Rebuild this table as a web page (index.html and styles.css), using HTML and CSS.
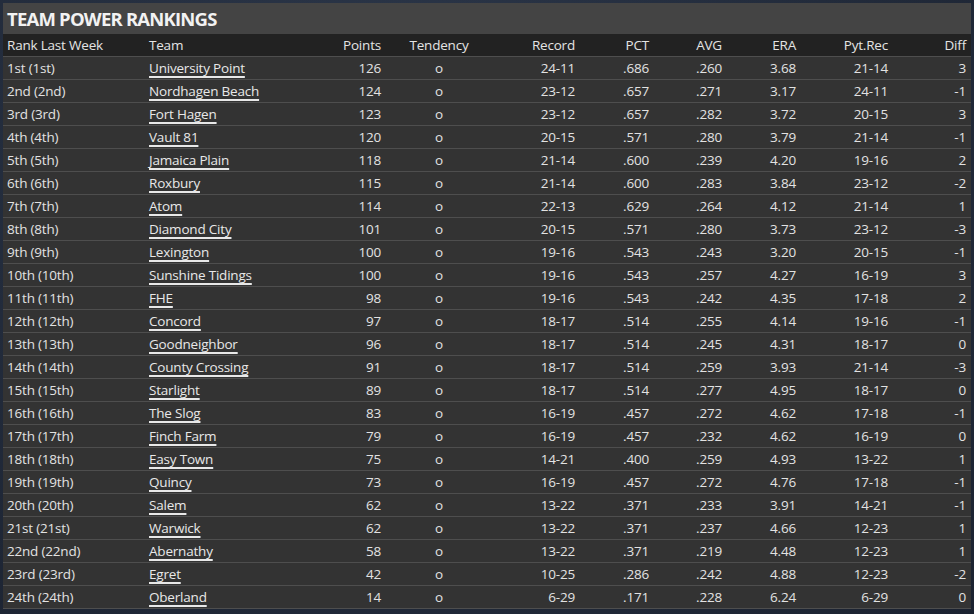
FILE: index.html
```html
<!DOCTYPE html>
<html>
<head>
<meta charset="utf-8">
<link rel="stylesheet" href="styles.css">
</head>
<body>
<div class="panel">
  <div class="title">TEAM POWER RANKINGS</div>
  <table class="rank">
    <colgroup>
      <col class="c-rank"><col class="c-team"><col class="c-pts"><col class="c-tend"><col class="c-rec"><col class="c-pct"><col class="c-avg"><col class="c-era"><col class="c-pyt"><col class="c-diff">
    </colgroup>
    <thead>
      <tr><th class="l">Rank Last Week</th><th class="l">Team</th><th>Points</th><th class="c">Tendency</th><th>Record</th><th>PCT</th><th>AVG</th><th>ERA</th><th>Pyt.Rec</th><th>Diff</th></tr>
    </thead>
    <tbody>
      <tr><td class="l">1st (1st)</td><td class="l"><a>University Point</a></td><td>126</td><td class="c">o</td><td>24-11</td><td>.686</td><td>.260</td><td>3.68</td><td>21-14</td><td>3</td></tr>
      <tr><td class="l">2nd (2nd)</td><td class="l"><a>Nordhagen Beach</a></td><td>124</td><td class="c">o</td><td>23-12</td><td>.657</td><td>.271</td><td>3.17</td><td>24-11</td><td>-1</td></tr>
      <tr><td class="l">3rd (3rd)</td><td class="l"><a>Fort Hagen</a></td><td>123</td><td class="c">o</td><td>23-12</td><td>.657</td><td>.282</td><td>3.72</td><td>20-15</td><td>3</td></tr>
      <tr><td class="l">4th (4th)</td><td class="l"><a>Vault 81</a></td><td>120</td><td class="c">o</td><td>20-15</td><td>.571</td><td>.280</td><td>3.79</td><td>21-14</td><td>-1</td></tr>
      <tr><td class="l">5th (5th)</td><td class="l"><a>Jamaica Plain</a></td><td>118</td><td class="c">o</td><td>21-14</td><td>.600</td><td>.239</td><td>4.20</td><td>19-16</td><td>2</td></tr>
      <tr><td class="l">6th (6th)</td><td class="l"><a>Roxbury</a></td><td>115</td><td class="c">o</td><td>21-14</td><td>.600</td><td>.283</td><td>3.84</td><td>23-12</td><td>-2</td></tr>
      <tr><td class="l">7th (7th)</td><td class="l"><a>Atom</a></td><td>114</td><td class="c">o</td><td>22-13</td><td>.629</td><td>.264</td><td>4.12</td><td>21-14</td><td>1</td></tr>
      <tr><td class="l">8th (8th)</td><td class="l"><a>Diamond City</a></td><td>101</td><td class="c">o</td><td>20-15</td><td>.571</td><td>.280</td><td>3.73</td><td>23-12</td><td>-3</td></tr>
      <tr><td class="l">9th (9th)</td><td class="l"><a>Lexington</a></td><td>100</td><td class="c">o</td><td>19-16</td><td>.543</td><td>.243</td><td>3.20</td><td>20-15</td><td>-1</td></tr>
      <tr><td class="l">10th (10th)</td><td class="l"><a>Sunshine Tidings</a></td><td>100</td><td class="c">o</td><td>19-16</td><td>.543</td><td>.257</td><td>4.27</td><td>16-19</td><td>3</td></tr>
      <tr><td class="l">11th (11th)</td><td class="l"><a>FHE</a></td><td>98</td><td class="c">o</td><td>19-16</td><td>.543</td><td>.242</td><td>4.35</td><td>17-18</td><td>2</td></tr>
      <tr><td class="l">12th (12th)</td><td class="l"><a>Concord</a></td><td>97</td><td class="c">o</td><td>18-17</td><td>.514</td><td>.255</td><td>4.14</td><td>19-16</td><td>-1</td></tr>
      <tr><td class="l">13th (13th)</td><td class="l"><a>Goodneighbor</a></td><td>96</td><td class="c">o</td><td>18-17</td><td>.514</td><td>.245</td><td>4.31</td><td>18-17</td><td>0</td></tr>
      <tr><td class="l">14th (14th)</td><td class="l"><a>County Crossing</a></td><td>91</td><td class="c">o</td><td>18-17</td><td>.514</td><td>.259</td><td>3.93</td><td>21-14</td><td>-3</td></tr>
      <tr><td class="l">15th (15th)</td><td class="l"><a>Starlight</a></td><td>89</td><td class="c">o</td><td>18-17</td><td>.514</td><td>.277</td><td>4.95</td><td>18-17</td><td>0</td></tr>
      <tr><td class="l">16th (16th)</td><td class="l"><a>The Slog</a></td><td>83</td><td class="c">o</td><td>16-19</td><td>.457</td><td>.272</td><td>4.62</td><td>17-18</td><td>-1</td></tr>
      <tr><td class="l">17th (17th)</td><td class="l"><a>Finch Farm</a></td><td>79</td><td class="c">o</td><td>16-19</td><td>.457</td><td>.232</td><td>4.62</td><td>16-19</td><td>0</td></tr>
      <tr><td class="l">18th (18th)</td><td class="l"><a>Easy Town</a></td><td>75</td><td class="c">o</td><td>14-21</td><td>.400</td><td>.259</td><td>4.93</td><td>13-22</td><td>1</td></tr>
      <tr><td class="l">19th (19th)</td><td class="l"><a>Quincy</a></td><td>73</td><td class="c">o</td><td>16-19</td><td>.457</td><td>.272</td><td>4.76</td><td>17-18</td><td>-1</td></tr>
      <tr><td class="l">20th (20th)</td><td class="l"><a>Salem</a></td><td>62</td><td class="c">o</td><td>13-22</td><td>.371</td><td>.233</td><td>3.91</td><td>14-21</td><td>-1</td></tr>
      <tr><td class="l">21st (21st)</td><td class="l"><a>Warwick</a></td><td>62</td><td class="c">o</td><td>13-22</td><td>.371</td><td>.237</td><td>4.66</td><td>12-23</td><td>1</td></tr>
      <tr><td class="l">22nd (22nd)</td><td class="l"><a>Abernathy</a></td><td>58</td><td class="c">o</td><td>13-22</td><td>.371</td><td>.219</td><td>4.48</td><td>12-23</td><td>1</td></tr>
      <tr><td class="l">23rd (23rd)</td><td class="l"><a>Egret</a></td><td>42</td><td class="c">o</td><td>10-25</td><td>.286</td><td>.242</td><td>4.88</td><td>12-23</td><td>-2</td></tr>
      <tr><td class="l">24th (24th)</td><td class="l"><a>Oberland</a></td><td>14</td><td class="c">o</td><td>6-29</td><td>.171</td><td>.228</td><td>6.24</td><td>6-29</td><td>0</td></tr>
    </tbody>
  </table>
</div>
</body>
</html>
```
FILE: styles.css
```css
html, body {
  margin: 0;
  padding: 0;
}
body {
  width: 974px;
  height: 614px;
  overflow: hidden;
  background: radial-gradient(ellipse at 40% 20%, #2c374a 0%, #222b3b 55%, #1b2230 100%);
  font-family: "Open Sans", "Noto Sans", sans-serif;
  color: #e2e2e2;
  padding: 3px 3px 0 3px;
  box-sizing: border-box;
}
.panel {
  width: 968px;
  background: #333333;
}
.title {
  height: 31px;
  background: #444444;
  font-size: 18.5px;
  font-weight: 700;
  line-height: 32px;
  padding-left: 4px;
  letter-spacing: -0.8px;
  color: #f2f2f2;
}
.rank {
  width: 968px;
  border-collapse: collapse;
  table-layout: fixed;
  font-size: 13.5px;
  letter-spacing: -0.2px;
}
.c-rank { width: 142px; }
.c-team { width: 160px; }
.c-pts { width: 80px; }
.c-tend { width: 108px; }
.c-rec { width: 86px; }
.c-pct { width: 74px; }
.c-avg { width: 73px; }
.c-era { width: 74px; }
.c-pyt { width: 92px; }
.c-diff { width: 79px; }
.rank th, .rank td {
  height: 22px;
  padding: 0 4px;
  text-align: right;
  white-space: nowrap;
  font-weight: 400;
  line-height: 22px;
  border-bottom: 1px solid #4e4e4e;
}
.rank th {
  background: #222222;
  color: #e4e4e4;
}
.rank th:last-child, .rank td:last-child { padding-right: 5px; }
.rank .l { text-align: left; }
.rank .c { text-align: center; }
.rank a {
  color: #e8e8e8;
  text-decoration: underline;
  text-underline-offset: 3px;
  text-decoration-thickness: 1.5px;
}
```
